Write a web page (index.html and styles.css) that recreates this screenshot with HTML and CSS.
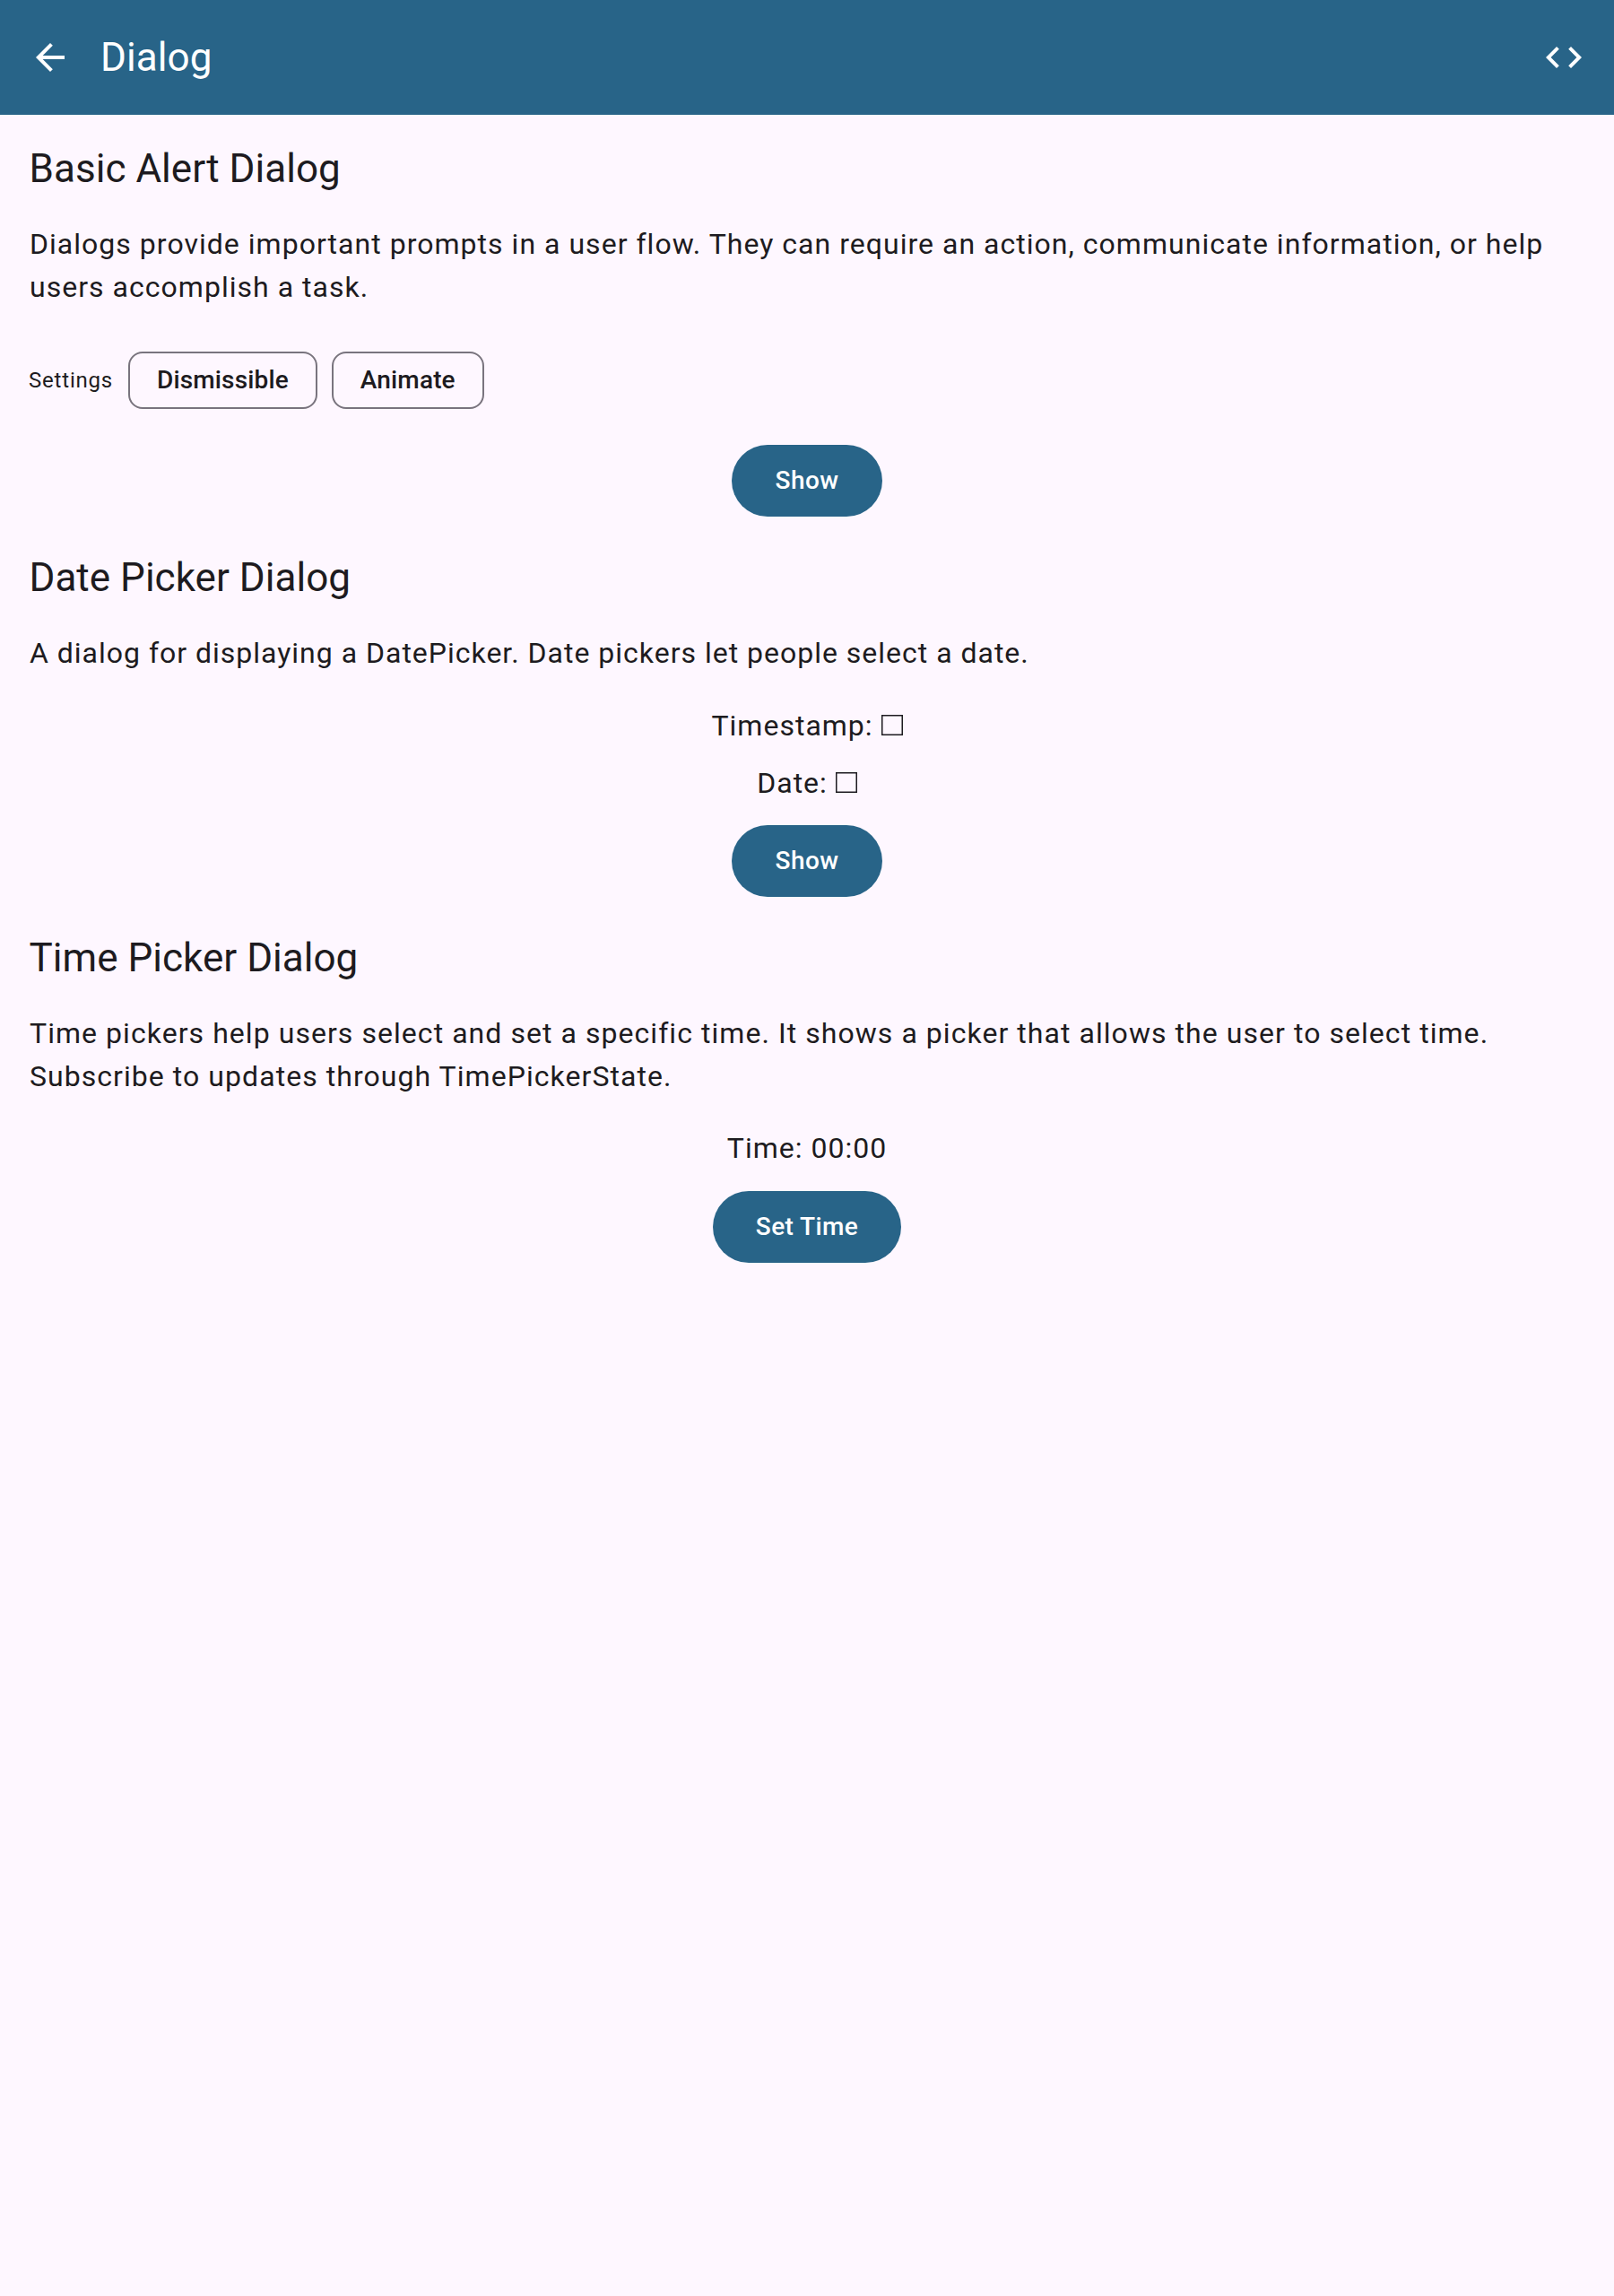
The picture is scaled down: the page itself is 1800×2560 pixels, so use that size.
FILE: index.html
```html
<!DOCTYPE html>
<html lang="en">
<head>
<meta charset="utf-8">
<title>Dialog</title>
<link rel="stylesheet" href="styles.css">
</head>
<body>
<header class="app-bar">
  <svg class="icon" viewBox="0 0 24 24"><path d="M20 11H7.83l5.59-5.59L12 4l-8 8 8 8 1.41-1.41L7.83 13H20v-2z"/></svg>
  <h1 class="app-title">Dialog</h1>
  <svg class="icon" viewBox="0 0 24 24"><path d="M9.4 16.6L4.8 12l4.6-4.6L8 6l-6 6 6 6 1.4-1.4zm5.2 0l4.6-4.6-4.6-4.6L16 6l6 6-6 6-1.4-1.4z"/></svg>
</header>
<main class="content">
  <section class="section">
    <h2 class="title">Basic Alert Dialog</h2>
    <p class="description">Dialogs provide important prompts in a user flow. They can require an action, communicate information, or help<br>users accomplish a task.</p>
    <div class="settings">
      <span class="settings-label">Settings</span>
      <button class="chip">Dismissible</button>
      <button class="chip">Animate</button>
    </div>
    <button class="button">Show</button>
  </section>
  <section class="section date-section">
    <h2 class="title">Date Picker Dialog</h2>
    <p class="description">A dialog for displaying a DatePicker. Date pickers let people select a date.</p>
    <p class="value">Timestamp: <svg class="empty-box" viewBox="0 0 24 23"><path d="M.75.75h22.5v21.5H.75z"/></svg></p>
    <p class="value">Date: <svg class="empty-box" viewBox="0 0 24 23"><path d="M.75.75h22.5v21.5H.75z"/></svg></p>
    <button class="button">Show</button>
  </section>
  <section class="section time-section">
    <h2 class="title">Time Picker Dialog</h2>
    <p class="description">Time pickers help users select and set a specific time. It shows a picker that allows the user to select time.<br>Subscribe to updates through TimePickerState.</p>
    <p class="value">Time: 00:00</p>
    <button class="button">Set Time</button>
  </section>
</main>
</body>
</html>
```
FILE: styles.css
```css
* { box-sizing: border-box; }
body { margin: 0; min-height: 2560px; background: #fef7ff; color: #1d1b20; font-family: Roboto, sans-serif; }
h1, h2, p { margin: 0; font-weight: 400; }
.app-bar { display: flex; align-items: center; height: 128px; padding: 0 32px; background: #286488; color: #fff; }
.icon { width: 48px; height: 48px; fill: currentColor; }
.app-title { flex: 1; margin-left: 32px; font-size: 44px; line-height: 56px; letter-spacing: 0.1px; }
.content { padding: 0 32px; }
.section { display: flex; flex-direction: column; align-items: center; }
.title { align-self: stretch; margin-top: 32px; padding-left: 0.5px; font-size: 44px; line-height: 56px; letter-spacing: 0.03px; }
.description { align-self: stretch; margin: 32px 0; padding-left: 1px; font-size: 32px; line-height: 48px; letter-spacing: 1.025px; white-space: nowrap; }
.settings { align-self: stretch; display: flex; align-items: center; gap: 16px; height: 64px; margin: 16px 0 40px; }
.settings-label { width: 95px; font-size: 24px; letter-spacing: 0.8px; }
.chip { height: 64px; padding: 0 30px; border: 2px solid #79747e; border-radius: 16px; background: none; color: #1d1b20; font: 500 28px/40px Roboto, sans-serif; letter-spacing: 0.15px; }
.button { min-width: 168px; height: 80px; padding: 0 48px; margin-bottom: 8px; border: 0; border-radius: 40px; background: #286488; color: #fff; font: 500 28px/40px Roboto, sans-serif; letter-spacing: 0.4px; }
.value { margin-bottom: 16px; font-size: 32px; line-height: 48px; letter-spacing: 1px; }
.value + .button { margin-top: 8px; }
.date-section .description { letter-spacing: 0.99px; }
.date-section .value { padding-top: 1px; margin-bottom: 15px; }
.time-section .description { letter-spacing: 1.05px; }
.empty-box { width: 24px; height: 23px; fill: none; stroke: currentColor; stroke-width: 1.5; }
```
